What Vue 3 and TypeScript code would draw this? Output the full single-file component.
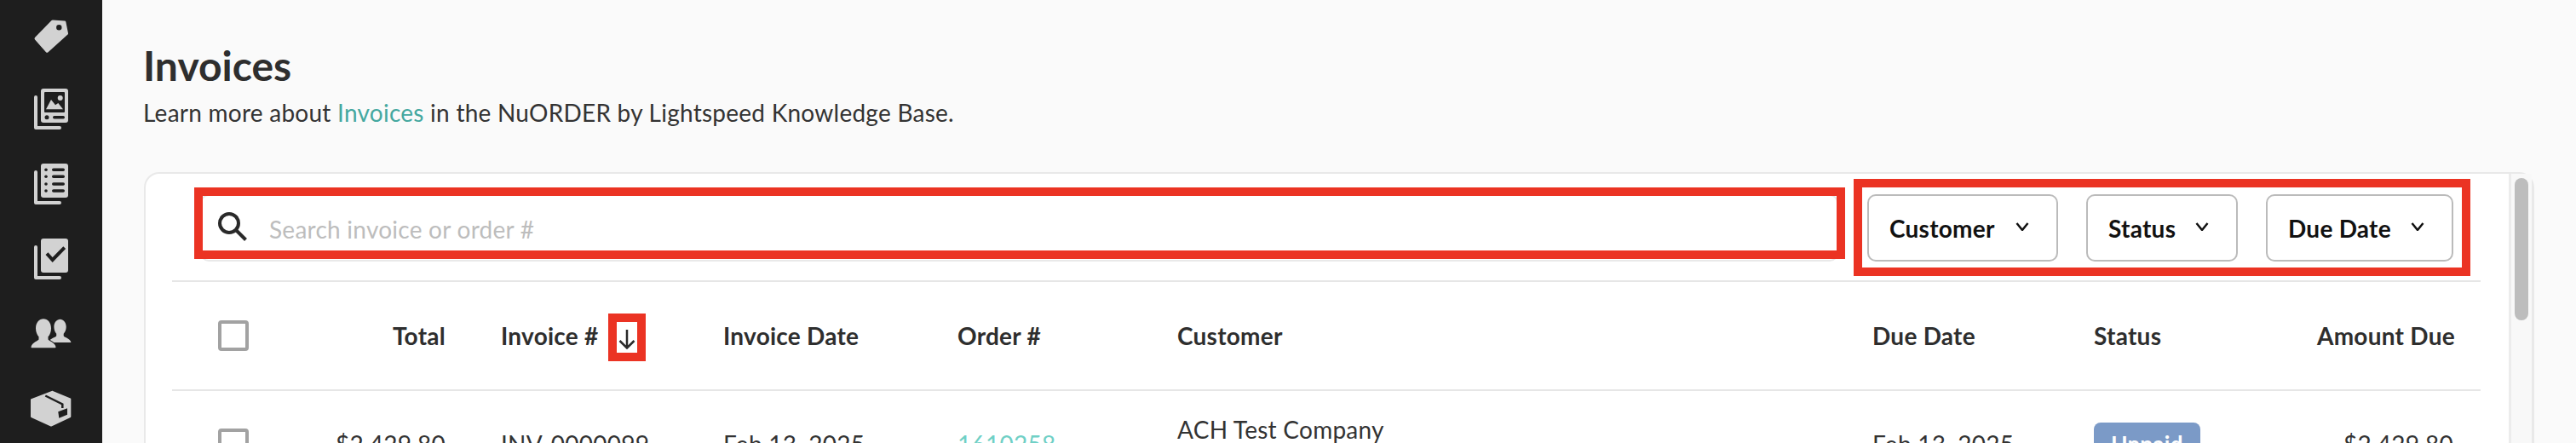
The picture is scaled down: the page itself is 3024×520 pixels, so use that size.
<script setup lang="ts">
interface Filter { label: string; cls: string }
const filters: Filter[] = [
  { label: 'Customer', cls: 'f-customer' },
  { label: 'Status', cls: 'f-status' },
  { label: 'Due Date', cls: 'f-due' },
]
</script>

<template>
  <div class="root">
    <nav class="side">
      <svg class="ico" viewBox="0 0 48 48"><path fill-rule="evenodd" d="M26 5.500 40 6.400q1 .1 1.300 1L44 21q.2 1-.5 1.600L20.500 43.300q-1.300 1.100-2.500 0L5 28.500q-1.100-1.300 0-2.400L24.500 6q.7-.6 1.500-.5ZM33.300 11a3.200 3.200 0 1 0 0 6.400 3.200 3.200 0 0 0 0-6.400Z" /></svg>
      <svg class="ico" viewBox="0 0 48 48">
        <path class="back" d="M6 10V46H34" />
        <rect x="12" y="0" width="32" height="40" rx="3" />
        <rect class="dark" x="16" y="4" width="24" height="24" rx="1" />
        <circle cx="34.700" cy="11" r="3" />
        <path d="M18 24.300 24 13l5 6.300 3.300-2.300 5.700 7.300Z" />
        <circle class="dark" cx="19" cy="33.700" r="2.500" />
        <rect class="dark" x="26" y="32" width="14" height="3.500" rx="1.700" />
      </svg>
      <svg class="ico" viewBox="0 0 48 48">
        <path class="back" d="M6 10V46H34" />
        <rect x="12" y="0" width="32" height="40" rx="3" />
        <g class="dark">
          <circle cx="18" cy="7.300" r="1.800" /><rect x="25" y="5.500" width="15" height="3.600" rx="1.800" />
          <circle cx="18" cy="15.300" r="1.800" /><rect x="25" y="13.500" width="15" height="3.600" rx="1.800" />
          <circle cx="18" cy="24" r="1.800" /><rect x="25" y="22.200" width="15" height="3.600" rx="1.800" />
          <circle cx="18" cy="32" r="1.800" /><rect x="25" y="30.200" width="15" height="3.600" rx="1.800" />
        </g>
      </svg>
      <svg class="ico" viewBox="0 0 48 48">
        <path class="back" d="M6 10V46H34" />
        <rect x="12" y="0" width="32" height="40" rx="3" />
        <path class="tick" d="M19 17.700 25.700 25 39.700 10.700" />
      </svg>
      <svg class="ico" viewBox="0 0 48 48">
        <path d="M34.700 6.700c-4 0-7.300 3.600-7.300 9 0 3.600 1.300 6.200 2.800 8v2.500c0 1.500-8 3-9 7.300 0 .5.300.5 1 .5H46.500c.7 0 1 0 .8-.5-1-4.300-8.600-5.800-8.600-7.300v-2.500c1.500-1.800 3-4.400 3-8 0-5.400-3.500-9-7-9Z" />
        <path class="cut" d="M15 6.300c-5 0-9 4.500-9 11 0 4.500 1.600 7.800 3.500 10v3c0 1.700-8 3.500-9 9 0 .7.300 1 1 1h27c.7 0 1-.3 1-1-1-5.500-9-7.300-9-9v-3c2-2.200 3.500-5.500 3.500-10 0-6.500-4-11-9-11Z" />
      </svg>
      <svg class="ico" viewBox="0 0 48 48">
        <path class="box" d="M1 13.300 25.700 3.800 46.300 12.300V33L24 43.500 1 33Z" />
        <path class="strap" d="M17.300 8.500 37.300 18.500V23" />
        <path class="dark" d="M32.300 27.300 43 23.300V30.700L33.300 34.700Z" />
      </svg>
    </nav>

    <main class="main">
      <h1 class="title">Invoices</h1>
      <p class="sub">Learn more about <a class="link">Invoices</a> in the NuORDER by Lightspeed Knowledge Base.</p>

      <section class="card">
        <div class="content">
          <div class="toolbar">
            <label class="search">
              <svg class="search-ico" viewBox="0 0 34 34"><circle cx="13" cy="13" r="11" /><path d="M21 21 32.500 32.500" /></svg>
              <span class="placeholder">Search invoice or order #</span>
              <i class="mark mark-search"></i>
            </label>
            <div class="filters">
              <button v-for="f in filters" :key="f.label" class="filter" :class="f.cls">
                <span>{{ f.label }}</span>
                <svg class="chev" viewBox="0 0 16 10"><path d="M1.500 1 8 9 14.500 1" /></svg>
              </button>
              <i class="mark mark-filters"></i>
            </div>
          </div>

          <div class="row head">
            <span class="check"></span>
            <span class="right">Total</span>
            <span class="inv">Invoice #
              <span class="arrow-wrap">
                <svg class="arrow" viewBox="0 0 22 24"><path d="M11 1V22.500M2.500 14 11 22.500 19.500 14" /></svg>
                <i class="mark mark-arrow"></i>
              </span>
            </span>
            <span>Invoice Date</span>
            <span>Order #</span>
            <span>Customer</span>
            <span>Due Date</span>
            <span>Status</span>
            <span class="right">Amount Due</span>
          </div>

          <div class="row data">
            <span class="check"></span>
            <span class="right">$2,429.80</span>
            <span class="inv">INV-0000099</span>
            <span>Feb 13, 2025</span>
            <a class="order">1610258</a>
            <span class="cust"><span>ACH Test Company</span><span>ACH-001</span></span>
            <span>Feb 13, 2025</span>
            <span><b class="badge">Unpaid</b></span>
            <span class="right">$2,429.80</span>
          </div>
        </div>
        <div class="track"><div class="thumb"></div></div>
      </section>
    </main>
  </div>
</template>

<style>
html, body { margin: 0; background: #fafafa; }
</style>

<style scoped>
.root {
  display: flex;
  width: 3024px;
  height: 520px;
  overflow: hidden;
  background: #fafafa;
  font-family: Lato, "Liberation Sans", sans-serif;
  font-size: 28px;
  letter-spacing: 0.25px;
  color: #333;
}
.side {
  flex: 0 0 120px;
  background: #1e1e1e;
  display: flex;
  flex-direction: column;
  align-items: center;
}
.ico {
  flex: 0 0 48px;
  width: 48px;
  height: 48px;
  margin-top: 40px;
  fill: #d2d2d2;
  overflow: visible;
}
.ico:first-child { margin-top: 18px; }
.ico:nth-child(2) { margin-top: 38px; }
.ico .back { fill: none; stroke: #d2d2d2; stroke-width: 4; stroke-linecap: round; stroke-linejoin: round; }
.ico .dark { fill: #1e1e1e; }
.ico .tick { fill: none; stroke: #1e1e1e; stroke-width: 4; }
.ico .cut { stroke: #1e1e1e; stroke-width: 2; paint-order: stroke; }
.ico .box { stroke: #d2d2d2; stroke-width: 2; stroke-linejoin: round; }
.ico .strap { fill: none; stroke: #1e1e1e; stroke-width: 2.500; }

.main { flex: 1; min-width: 0; padding: 48px 49px 0 48px; }
.title { margin: 0; font-size: 48px; line-height: 58px; font-weight: 700; letter-spacing: 0; color: #2e2e2e; }
.sub { margin: 6px 0 50px; font-size: 28px; line-height: 40px; color: #333; }
.link { color: #45a8a0; }

.card {
  display: flex;
  margin-left: 1px;
  height: 400px;
  background: #fff;
  border-style: solid;
  border-color: #e9e9e9;
  border-width: 2px 3px 0 2px;
  border-radius: 18px 18px 0 0;
  box-sizing: border-box;
}
.content { flex: 1; min-width: 0; padding: 0 33px 0 31px; }
.track { flex: 0 0 24px; background: #f8f8f8; border-left: 3px solid #ececec; }
.thumb { width: 16px; height: 167px; margin: 5px 0 0 4px; background: #bdbdbd; border-radius: 8px; }

.toolbar {
  display: flex;
  align-items: flex-start;
  justify-content: space-between;
  height: 127px;
  padding: 24px 32px 0 33px;
  box-sizing: border-box;
  border-bottom: 2px solid #e6e6e6;
}
.search {
  position: relative;
  display: flex;
  align-items: center;
  box-sizing: border-box;
  width: 1923px;
  height: 79px;
  padding-left: 19px;
  border: 2px solid #e9e9e9;
  border-radius: 10px;
}
.search-ico { width: 34px; height: 34px; fill: none; stroke: #2a2a2a; stroke-width: 4; margin-top: -4px; }
.placeholder { margin-left: 26px; color: #bdbdbd; margin-top: 2px; }

.filters { position: relative; display: flex; gap: 33px; }
.filter {
  display: flex;
  align-items: center;
  justify-content: space-between;
  box-sizing: border-box;
  height: 79px;
  padding: 0 32px 0 24px;
  background: #fff;
  border: 2px solid #bbb;
  border-radius: 10px;
  font: 700 28px Lato, "Liberation Sans", sans-serif;
  letter-spacing: 0.25px;
  color: #111;
}
.f-customer { width: 224px; }
.f-status { width: 178px; }
.f-due { width: 220px; }
.chev { width: 16px; height: 10px; margin-top: -4px; fill: none; stroke: #111; stroke-width: 2.500; }

.mark { position: absolute; box-sizing: border-box; border: 10px solid #eb3323; pointer-events: none; }
.mark-search { left: -9px; right: -10px; top: -10px; bottom: 1px; }
.mark-filters { left: -16px; right: -20px; top: -18px; bottom: -17px; }
.mark-arrow { left: -11px; right: -11px; top: -18px; bottom: -14px; }

.row {
  display: grid;
  grid-template-columns: 132px 135px 326px 275px 258px 816px 260px 262px 160px;
  align-items: center;
  box-sizing: border-box;
  padding-left: 54px;
  border-bottom: 2px solid #e6e6e6;
  line-height: 34px;
  white-space: nowrap;
}
.head { height: 128px; font-weight: 700; color: #2e2e2e; }
.data { height: 126px; }
.inv { padding-left: 65px; }
.right { text-align: right; }
.check { display: block; box-sizing: border-box; width: 36px; height: 36px; border: 4px solid #a2a2a2; border-radius: 4px; background: #fff; }
.arrow-wrap { position: relative; display: inline-block; vertical-align: middle; margin-left: 15px; width: 22px; height: 24px; }
.arrow { display: block; width: 22px; height: 24px; fill: none; stroke: #2a2a2a; stroke-width: 2.500; }
.order { color: #70d0c6; }
.cust { display: flex; flex-direction: column; }
.badge {
  display: inline-block;
  box-sizing: border-box;
  width: 125px;
  height: 50px;
  line-height: 50px;
  text-align: center;
  background: #7b9ac7;
  color: #fff;
  font-size: 26px;
  border-radius: 8px;
  vertical-align: middle;
}
</style>
